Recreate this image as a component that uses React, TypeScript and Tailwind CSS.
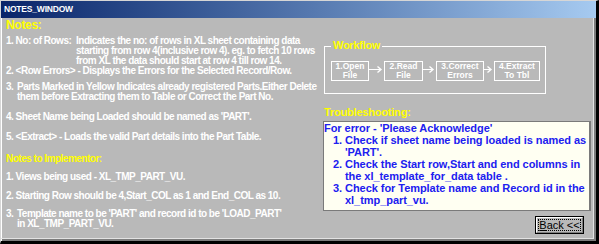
import React from 'react';

const STEPS = [
  { top: '1.Open', bottom: 'File', w: 'w-[38px]' },
  { top: '2.Read', bottom: 'File', w: 'w-[39px]' },
  { top: '3.Correct', bottom: 'Errors', w: 'w-[48px]' },
  { top: '4.Extract', bottom: 'To Tbl', w: 'w-[46px]' },
];
const GAPS = [15, 13, 10];

const Arrow: React.FC<{ w: number }> = ({ w }) => (
  <svg width={w} height={20} className="shrink-0">
    <line x1={0} y1={8.5} x2={w - 3} y2={8.5} stroke="#fff" strokeWidth={1} />
    <polyline points={`${w - 6.5},5.5 ${w - 3},8.5 ${w - 6.5},11.5`} fill="none" stroke="#fff" strokeWidth={1.4} />
  </svg>
);

export default function App() {
  return (
    <div className="w-[599px] h-[244px] flex flex-col bg-[#b9b9b9] border-t border-l border-t-[#d6d6d6] border-l-[#d6d6d6] border-r-[3px] border-b-[3px] border-r-black border-b-black shadow-[inset_1px_1px_0_#ffffff,inset_-2px_-2px_0_#7c7c7c] font-['Liberation_Sans',Arial,sans-serif] overflow-hidden">
      {/* title bar */}
      <div className="h-[17px] shrink-0 bg-gradient-to-r from-[#0a246a] to-[#a6caf0] px-[3px] text-[8.5px] leading-[17px] font-bold text-white tracking-[-0.2px]">
        NOTES_WINDOW
      </div>

      <div className="flex-1 flex mr-[2px] mb-[2px] border-r border-b border-[#e2e2e2]">
        {/* left notes */}
        <div className="w-[322px] shrink-0 pl-[5px] text-white text-[10px] leading-[10px] font-bold tracking-[-0.5px] whitespace-nowrap">
          <div className="text-[12px] leading-[14px] tracking-[-0.3px] text-[#ffff00]">Notes:</div>
          <div className="mt-[4px] flex">
            <span className="w-[70px] shrink-0">1. No: of Rows:</span>
            <div>
              Indicates the no: of rows in XL sheet containing data<br />
              starting from row 4(inclusive row 4). eg. to fetch 10 rows<br />
              from XL the data should start at row 4 till row 14.
            </div>
          </div>
          <div>{'2. <Row Errors> - Displays the Errors for the Selected Record/Row.'}</div>
          <div className="mt-[6px] flex">
            <span className="w-[11px] shrink-0">3.</span>
            <div>
              Parts Marked in Yellow Indicates already registered Parts.Either Delete<br />
              them before Extracting them to Table or Correct the Part No.
            </div>
          </div>
          <div className="mt-[10px]">4. Sheet Name being Loaded should be named as 'PART'.</div>
          <div className="mt-[10px]">{'5. <Extract> - Loads the valid Part details into the Part Table.'}</div>
          <div className="mt-[12px] text-[#ffff00]">Notes to Implementor:</div>
          <div className="mt-[8px]">1. Views being used - XL_TMP_PART_VU.</div>
          <div className="mt-[9px]">2. Starting Row should be 4,Start_COL as 1 and End_COL as 10.</div>
          <div className="mt-[8px] flex">
            <span className="w-[11px] shrink-0">3.</span>
            <div>
              Template name to be 'PART' and record id to be 'LOAD_PART'<br />
              in XL_TMP_PART_VU.
            </div>
          </div>
        </div>

        {/* right side */}
        <div className="w-[270px] shrink-0 flex flex-col">
          <div className="relative mt-[28px] ml-[1px] w-[222px] h-[48px] border border-white pl-[6px] pt-[14px] flex items-start">
            <span className="absolute left-[6px] top-[-7px] px-[2px] bg-[#b9b9b9] text-[11px] leading-[11px] font-bold text-[#ffff00] tracking-[-0.3px]">
              Workflow
            </span>
            {STEPS.map((s, i) => (
              <React.Fragment key={s.top}>
                <div className={`${s.w} h-[20px] shrink-0 border border-white flex flex-col items-center justify-center text-[8.5px] leading-[9px] font-bold text-white whitespace-nowrap`}>
                  <span>{s.top}</span>
                  <span>{s.bottom}</span>
                </div>
                {i < GAPS.length && <Arrow w={GAPS[i]} />}
              </React.Fragment>
            ))}
          </div>

          <div className="mt-[12px] ml-[1px] text-[11px] leading-[12px] font-bold text-[#ffff00] tracking-[-0.2px]">Troubleshooting:</div>

          <div className="mt-[3px] w-[268px] h-[90px] border border-[#7a7a7a] border-r-2 bg-[#fffff2] text-[11px] leading-[12px] font-bold text-[#2020f0] tracking-[-0.05px] whitespace-nowrap">
            <div>For error - 'Please Acknowledge'</div>
            <div className="flex pl-[9px]">
              <span className="w-[12px] shrink-0">1.</span>
              <div>Check if sheet name being loaded is named as<br />'PART'.</div>
            </div>
            <div className="flex pl-[9px]">
              <span className="w-[12px] shrink-0">2.</span>
              <div>Check the Start row,Start and end columns in<br />the xl_template_for_data table .</div>
            </div>
            <div className="flex pl-[9px]">
              <span className="w-[12px] shrink-0">3.</span>
              <div>Check for Template name and Record id in the<br />xl_tmp_part_vu.</div>
            </div>
          </div>

          <div className="mt-[5px] ml-[212px] w-[49px] h-[18px] border border-black">
            <div className="h-full border border-t-white border-l-white border-r-[#808080] border-b-[#808080] p-[1px]">
              <div className="h-full border border-dotted border-black flex items-center justify-center text-[11px] leading-[11px] text-black">
                <span><span className="underline">B</span>ack &lt;&lt;</span>
              </div>
            </div>
          </div>
        </div>
      </div>
    </div>
  );
}
